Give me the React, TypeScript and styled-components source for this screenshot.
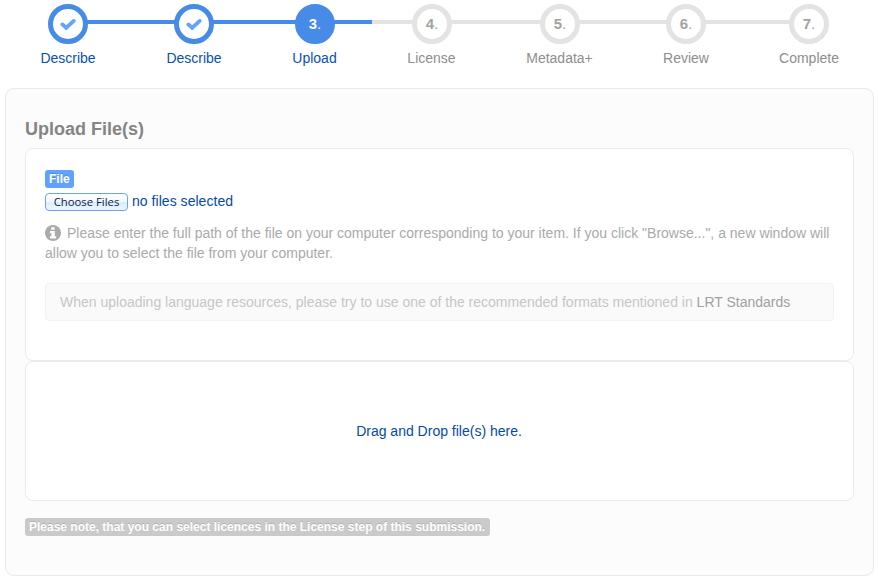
import React from "react";
import styled, { createGlobalStyle } from "styled-components";

const GlobalStyle = createGlobalStyle`
  * { box-sizing: border-box; }
  body {
    margin: 0;
    background: #fff;
    font: 14px/20px "Liberation Sans", Arial, sans-serif;
    color: #aaa;
  }
`;

type State = "done" | "active" | "todo";

const Page = styled.div`
  width: 878px;
  height: 582px;
  overflow: hidden;
  padding: 4px 4px 0 5px;
`;

const Steps = styled.ol`
  list-style: none;
  margin: 0 0 20px;
  padding: 0 0 0 1px;
  height: 64px;
  display: grid;
  grid-template-columns: 124px 128px 114px 120px 136px 116px 130px;
`;

const Step = styled.li`
  display: flex;
  flex-direction: column;
`;

const Track = styled.div`
  display: flex;
  height: 40px;
`;

const Line = styled.span<{ $on: boolean; $hidden?: boolean }>`
  flex: 1;
  height: 4px;
  margin: 16px -1px 0;
  background: ${(p) => (p.$hidden ? "transparent" : p.$on ? "#478be8" : "#e3e3e3")};
  &:first-child { margin-left: 0; }
  &:last-child { margin-right: 0; }
`;

const Circle = styled.span<{ $state: State }>`
  width: 40px;
  height: 40px;
  flex: none;
  display: flex;
  align-items: center;
  justify-content: center;
  border-radius: 50%;
  border: 5px solid ${(p) => (p.$state === "todo" ? "#e3e3e3" : "#478be8")};
  background: ${(p) => (p.$state === "active" ? "#478be8" : "#fff")};
  color: ${(p) => (p.$state === "active" ? "#fff" : "#a3a3a3")};
  font-size: 15px;
  z-index: 1;
`;

const StepLabel = styled.span<{ $state: State; $narrow?: boolean }>`
  margin-top: 4px;
  padding-right: ${(p) => (p.$narrow ? 1 : 0)}px;
  text-align: center;
  color: ${(p) => (p.$state === "todo" ? "#8e8e8e" : "#0850b8")};
`;

const Panel = styled.main`
  height: 488px;
  border: 1px solid #e9e9e9;
  border-radius: 9px;
  background: #fcfcfc;
  padding: 30px 19px 0;
`;

const Heading = styled.h4`
  margin: 0 0 9px;
  font-size: 18px;
  line-height: 20px;
  color: #858585;
`;

const FileBox = styled.section`
  height: 213px;
  border: 1px solid #ebebeb;
  border-radius: 8px;
  background: #fff;
  padding: 21px 19px 0;
`;

const DropBox = styled(FileBox)`
  height: 140px;
  padding: 0 1px 0 0;
  display: flex;
  align-items: center;
  justify-content: center;
  color: #0449b0;
`;

const Tag = styled.span<{ $muted?: boolean }>`
  display: block;
  width: ${(p) => (p.$muted ? 465 : 29)}px;
  height: 18px;
  padding: 0 4px;
  margin-top: ${(p) => (p.$muted ? 17 : 0)}px;
  border-radius: 3px;
  background: ${(p) => (p.$muted ? "#cacaca" : "#62a2fc")};
  color: #fff;
  font-size: 12px;
  font-weight: bold;
  line-height: 18px;
  white-space: nowrap;
  text-shadow: 0 -1px 0 rgba(0, 0, 0, 0.15);
`;

const Picker = styled.div`
  display: flex;
  align-items: center;
  gap: 4px;
  height: 18px;
  margin-top: 5px;
  color: #0449b0;
`;

const PickButton = styled.button`
  width: 83px;
  height: 18px;
  padding: 0 0 1px;
  border: 1px solid #69a3f0;
  border-radius: 4px;
  background: linear-gradient(#fff, #f3f8ff 48%, #dcebff 52%, #edf6ff);
  color: #041c48;
  font: 500 11.3px/15px "Open Sans", sans-serif;
  white-space: nowrap;
`;

const PickStatus = styled.span`
  height: 22px;
  letter-spacing: 0.04px;
`;

const Help = styled.p`
  margin: 12px -8px 19px 0;
  height: 41px;
  white-space: nowrap;
`;

const InfoIcon = styled.svg`
  width: 16px;
  height: 16px;
  margin-right: 6px;
  vertical-align: -3px;
`;

const Alert = styled.div`
  height: 38px;
  padding: 8px 14px;
  border: 1px solid #f2f2f2;
  border-radius: 4px;
  background: #fafafa;
  color: #c6c6c6;
  white-space: nowrap;
`;

const AlertLink = styled.a`
  color: #a1a1a1;
`;

const steps: { label: string; state: State; narrow?: boolean }[] = [
  { label: "Describe", state: "done" },
  { label: "Describe", state: "done" },
  { label: "Upload", state: "active", narrow: true },
  { label: "License", state: "todo", narrow: true },
  { label: "Metadata+", state: "todo", narrow: true },
  { label: "Review", state: "todo" },
  { label: "Complete", state: "todo" },
];

const Check = () => (
  <svg width="16" height="13" viewBox="0 0 16 13">
    <path d="M2.4 6.4 6.2 10 13.7 2.9" fill="none" stroke="#62a4ff" strokeWidth="3.8" strokeLinejoin="miter" strokeLinecap="round" />
  </svg>
);

export default function App() {
  return (
    <>
      <GlobalStyle />
      <Page>
        <Steps>
          {steps.map((s, i) => (
            <Step key={i}>
              <Track>
                <Line $on={s.state !== "todo"} $hidden={i === 0} />
                <Circle $state={s.state}>
                  {s.state === "done" ? <Check /> : <span><b>{i + 1}</b>.</span>}
                </Circle>
                <Line $on={s.state !== "todo"} $hidden={i === steps.length - 1} />
              </Track>
              <StepLabel $state={s.state} $narrow={s.narrow}>{s.label}</StepLabel>
            </Step>
          ))}
        </Steps>
        <Panel>
          <Heading>Upload File(s)</Heading>
          <FileBox>
            <Tag>File</Tag>
            <Picker>
              <PickButton type="button">Choose Files</PickButton>
              <PickStatus>no files selected</PickStatus>
            </Picker>
            <Help>
              <InfoIcon viewBox="0 0 16 16">
                <circle cx="8" cy="8" r="8" fill="#aaa" />
                <path d="M6.2 2.2h3.4v2.6H6.2zM5 6.1h4.8v5.1h1.3v2.2H5v-2.2h1.4V8.2H5z" fill="#fff" />
              </InfoIcon>
              Please enter the full path of the file on your computer corresponding to your item. If you click "Browse...", a new window will
              <br />
              allow you to select the file from your computer.
            </Help>
            <Alert>
              When uploading language resources, please try to use one of the recommended formats mentioned in <AlertLink>LRT Standards</AlertLink>
            </Alert>
          </FileBox>
          <DropBox>Drag and Drop file(s) here.</DropBox>
          <Tag $muted>Please note, that you can select licences in the License step of this submission.</Tag>
        </Panel>
      </Page>
    </>
  );
}
